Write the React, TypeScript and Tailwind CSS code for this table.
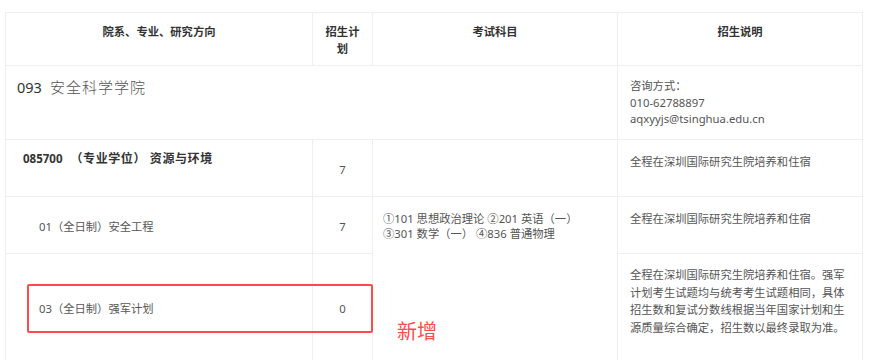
import React from "react";

const cell = "border border-[#efefef] px-[10px]";

export default function App() {
  return (
    <div
      className="w-[869px] h-[360px] overflow-hidden bg-white pt-[12px] pl-[5px] text-[11.3px] text-[#555]"
      style={{ fontFamily: '"Noto Sans", "Noto Sans CJK SC", sans-serif' }}
    >
      <div className="relative w-[857px]">
        <table className="table-fixed border-collapse w-[857px]">
          <colgroup>
            <col className="w-[307px]" />
            <col className="w-[60px]" />
            <col className="w-[245px]" />
            <col className="w-[245px]" />
          </colgroup>
          <thead>
            <tr className="h-[53px]">
              <th className={`${cell} align-top pt-[10px] leading-[17px] font-bold text-[#333] text-center`}>院系、专业、研究方向</th>
              <th className={`${cell} align-top pt-[10px] leading-[17px] font-bold text-[#333] text-center`}>招生计划</th>
              <th className={`${cell} align-top pt-[10px] leading-[17px] font-bold text-[#333] text-center`}>考试科目</th>
              <th className={`${cell} align-top pt-[10px] leading-[17px] font-bold text-[#333] text-center`}>招生说明</th>
            </tr>
          </thead>
          <tbody>
            <tr className="h-[74px]">
              <td colSpan={3} className={`${cell} align-top pt-[11px] pl-[11px]`}>
                <span className="text-[14.5px] leading-[20px] text-[#333]">093</span>
                <span className="ml-[8px] text-[15px] leading-[20px] font-light tracking-[1px] text-[#555]">安全科学学院</span>
              </td>
              <td className={`${cell} align-top pt-[12px] pl-[12px] leading-[16.5px]`}>
                <div>咨询方式：</div>
                <div>010-62788897</div>
                <div>aqxyyjs@tsinghua.edu.cn</div>
              </td>
            </tr>
            <tr className="h-[57px]">
              <td className={`${cell} align-top pt-[10px] pl-[17px] leading-[17px]`}>
                <span className="text-[11.5px] font-bold text-[#333]">085700</span>
                <span className="ml-[8px] text-[12px] font-bold tracking-[0.6px] text-[#333]">（专业学位） 资源与环境</span>
              </td>
              <td className={`${cell} align-middle text-center leading-[17px] pt-[2px]`}>7</td>
              <td className={`${cell}`}></td>
              <td className={`${cell} align-top pt-[13px] pl-[12px] leading-[17px]`}>全程在深圳国际研究生院培养和住宿</td>
            </tr>
            <tr className="h-[57px]">
              <td className={`${cell} align-middle pl-[33px] leading-[17px] pt-[3px]`}>01（全日制）安全工程</td>
              <td className={`${cell} align-middle text-center leading-[17px] pt-[3px]`}>7</td>
              <td rowSpan={2} className={`${cell} align-top pt-[14px] pl-[10px] leading-[15px]`}>
                ①101 思想政治理论 ②201 英语（一）
                <br />
                ③301 数学（一） ④836 普通物理
              </td>
              <td className={`${cell} align-top pt-[13px] pl-[12px] leading-[17px]`}>全程在深圳国际研究生院培养和住宿</td>
            </tr>
            <tr className="h-[110px]">
              <td className={`${cell} align-middle pl-[33px] leading-[17px]`}>03（全日制）强军计划</td>
              <td className={`${cell} align-middle text-center leading-[17px]`}>0</td>
              <td className={`${cell} align-top pt-[12px] pb-[12px] pl-[12px] pr-[12px] leading-[17.5px]`}>
                全程在深圳国际研究生院培养和住宿。强军计划考生试题均与统考考生试题相同，具体招生数和复试分数线根据当年国家计划和生源质量综合确定，招生数以最终录取为准。
              </td>
            </tr>
          </tbody>
        </table>
        <div className="absolute left-[22px] top-[272px] w-[346px] h-[49px] border-[2.5px] border-[#ff4a4a] rounded-[2px]" />
        <div className="absolute left-[392px] top-[307px] text-[20px] leading-[26px] text-[#ff4a4a]">新增</div>
      </div>
    </div>
  );
}
